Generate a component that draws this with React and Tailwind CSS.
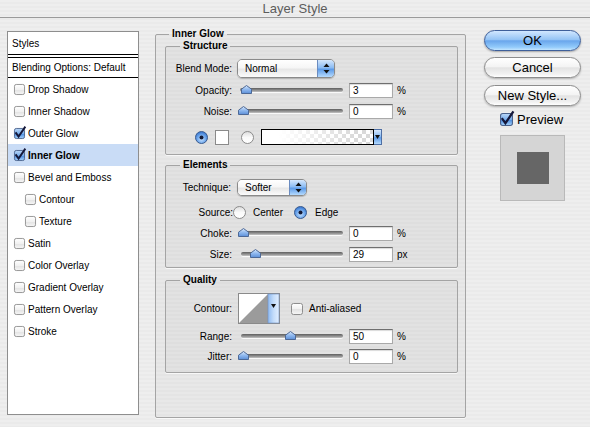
import React from 'react';

// --- small Aqua widgets ---
const Checkbox = ({ checked, size = 11 }) => (
    <svg width={size} height={size} viewBox="0 0 12 12" className="shrink-0 overflow-visible">
        <defs>
            <linearGradient id="cbOff" x1="0" y1="0" x2="0" y2="1">
                <stop offset="0" stopColor="#ffffff" />
                <stop offset="0.5" stopColor="#f1f1f1" />
                <stop offset="0.55" stopColor="#e3e3e3" />
                <stop offset="1" stopColor="#f7f7f7" />
            </linearGradient>
            <linearGradient id="cbOn" x1="0" y1="0" x2="0" y2="1">
                <stop offset="0" stopColor="#bcd8f8" />
                <stop offset="0.5" stopColor="#78aeec" />
                <stop offset="0.55" stopColor="#4d8ee0" />
                <stop offset="1" stopColor="#a6d2fb" />
            </linearGradient>
        </defs>
        <rect x="0.5" y="0.5" width="11" height="11" rx="2" fill={checked ? 'url(#cbOn)' : 'url(#cbOff)'} stroke={checked ? '#4a628c' : '#8e8e8e'} />
        {checked && <path d="M2.3 5.6 L5 9.4 L11.8 -0.6" fill="none" stroke="#15183a" strokeWidth="2.1" strokeLinecap="square" />}
    </svg>
);

const Radio = ({ on }) => (
    <svg width="13" height="13" viewBox="0 0 13 13" className="shrink-0">
        <defs>
            <radialGradient id="rdOn" cx="0.5" cy="0.65" r="0.6">
                <stop offset="0" stopColor="#c6e2ff" />
                <stop offset="0.6" stopColor="#6da6ec" />
                <stop offset="1" stopColor="#3a78d0" />
            </radialGradient>
            <linearGradient id="rdOff" x1="0" y1="0" x2="0" y2="1">
                <stop offset="0" stopColor="#dcdcdc" />
                <stop offset="0.5" stopColor="#fafafa" />
                <stop offset="1" stopColor="#ffffff" />
            </linearGradient>
        </defs>
        <circle cx="6.5" cy="6.5" r="6" fill={on ? 'url(#rdOn)' : 'url(#rdOff)'} stroke={on ? '#3c5c8e' : '#8a8a8a'} />
        {on && <circle cx="6.5" cy="6.5" r="2" fill="#141a36" />}
    </svg>
);

const Thumb = () => (
    <svg width="11" height="9" viewBox="0 0 11 9">
        <defs>
            <linearGradient id="thb" x1="0" y1="0" x2="0" y2="1">
                <stop offset="0" stopColor="#d7e8fc" />
                <stop offset="0.5" stopColor="#8fb8ee" />
                <stop offset="1" stopColor="#5c8fd8" />
            </linearGradient>
        </defs>
        <polygon points="5.5,0.5 10.5,4.2 10.5,8.5 0.5,8.5 0.5,4.2" fill="url(#thb)" stroke="#4c6896" />
    </svg>
);

const Slider = ({ pct, className = 'ml-[8px] w-[103px]' }) => (
    <div className={`relative h-[15px] flex items-center ${className}`}>
        <div className="w-full h-[4px] -mt-[2px] rounded-full bg-[linear-gradient(#5e5e5e,#8f8f8f_55%,#c4c4c4)] shadow-[0_1px_0_rgba(255,255,255,0.8)]" />
        <div className="absolute top-[2px]" style={{ left: `${pct * 92 - 2}px` }}>
            <Thumb />
        </div>
    </div>
);

const NumField = ({ value }) => (
    <div className="ml-[6px] w-[44px] h-[15px] bg-white border border-[#a9a9a9] border-t-[#6f6f6f] shadow-[inset_0_1px_1px_rgba(0,0,0,0.15)] pl-[3px] leading-[14px] text-[10px] text-black">
        {value}
    </div>
);

const PopUp = ({ value, className }) => (
    <div className={`flex overflow-hidden rounded-[5px] border border-[#8a8a8a] shadow-[0_1px_1px_rgba(0,0,0,0.2)] ${className}`}>
        <div className="flex-1 flex items-center pl-[7px] text-[10px] text-black bg-[linear-gradient(#ffffff,#f6f6f6_45%,#e7e7e7_55%,#fbfbfb)]">
            {value}
        </div>
        <div className="w-[17px] flex items-center justify-center border-l border-[#6b8cc0] bg-[linear-gradient(#d5e7fc,#8cbcf3_45%,#5d9be8_55%,#b5dafd)]">
            <svg width="7" height="11" viewBox="0 0 7 11">
                <polygon points="3.5,0.5 6.5,4 0.5,4" fill="#111" />
                <polygon points="3.5,10.5 6.5,7 0.5,7" fill="#111" />
            </svg>
        </div>
    </div>
);

const AquaButton = ({ children, primary }) => (
    <div className={primary
        ? 'h-[21px] rounded-full border border-[#3e5f9a] flex items-center justify-center text-[13px] text-black bg-[linear-gradient(#d1e7ff,#95c4f5_45%,#6aa6ec_52%,#93cbfb_85%,#c4e6ff)] shadow-[0_1px_2px_rgba(0,0,0,0.3)]'
        : 'h-[21px] rounded-full border border-[#8c8c8c] flex items-center justify-center text-[13px] text-black bg-[linear-gradient(#ffffff,#f4f4f4_45%,#e3e3e3_52%,#f2f2f2_85%,#ffffff)] shadow-[0_1px_2px_rgba(0,0,0,0.25)]'}>
        {children}
    </div>
);

const Label = ({ children, className = 'w-[66px]' }) => (
    <div className={`shrink-0 text-right text-[10px] text-black ${className}`}>{children}</div>
);

const STYLES = [
    { name: 'Drop Shadow' },
    { name: 'Inner Shadow' },
    { name: 'Outer Glow', checked: true },
    { name: 'Inner Glow', checked: true, active: true },
    { name: 'Bevel and Emboss' },
    { name: 'Contour', sub: true },
    { name: 'Texture', sub: true },
    { name: 'Satin' },
    { name: 'Color Overlay' },
    { name: 'Gradient Overlay' },
    { name: 'Pattern Overlay' },
    { name: 'Stroke' },
];

const fieldsetCls = 'border border-[#a4a4a4] rounded-[2px] bg-black/[0.025] shadow-[0_1px_0_rgba(255,255,255,0.7)]';
const legendCls = 'ml-[14px] px-[3px] leading-[12px] text-[10px] font-bold text-black';

const App = () => {
    return (
        <div className="w-[590px] h-[427px] overflow-hidden font-['Liberation_Sans',Arial,sans-serif] bg-[repeating-linear-gradient(180deg,#eeeeee_0px,#eeeeee_2px,#eaeaea_2px,#eaeaea_4px)]">
            {/* Title bar */}
            <div className="h-[18px] border-b border-[#9a9a9a] flex items-center justify-center text-[13px] text-[#5c5c5c] leading-none pb-[1px]">
                Layer Style
            </div>

            <div className="flex items-start">
                {/* Styles list */}
                <div className="ml-[7px] mt-[13px] w-[132px] h-[384px] bg-white border border-[#8e8e8e] text-[10px] text-black">
                    <div className="h-[22px] flex items-center pl-[4px]">Styles</div>
                    <div className="h-[4px] border-t-[1.5px] border-b-[1.5px] border-black" />
                    <div className="h-[20px] flex items-center pl-[4px] border-b border-black">Blending Options: Default</div>
                    {STYLES.map(s => (
                        <div key={s.name} className={`h-[22px] flex items-center ${s.active ? 'bg-[#c9dcf6] font-bold' : ''}`}>
                            <div className={s.sub ? 'ml-[17px]' : 'ml-[6px]'}>
                                <Checkbox checked={s.checked} />
                            </div>
                            <span className="ml-[3px]">{s.name}</span>
                        </div>
                    ))}
                </div>

                {/* Inner Glow panel */}
                <fieldset className={`ml-[16px] mt-[10px] w-[311px] h-[390px] pl-[9px] pr-[7px] ${fieldsetCls}`}>
                    <legend className="ml-[4px] px-[3px] leading-[12px] text-[10px] font-bold text-black">Inner Glow</legend>

                    {/* Structure */}
                    <fieldset className={`h-[115px] ${fieldsetCls}`}>
                        <legend className={legendCls}>Structure</legend>
                        <div className="mt-[7px] flex items-center h-[19px]">
                            <Label>Blend Mode:</Label>
                            <PopUp value="Normal" className="ml-[5px] w-[98px] h-[19px]" />
                        </div>
                        <div className="mt-[5px] flex items-center h-[15px]">
                            <Label>Opacity:</Label>
                            <Slider pct={0.03} />
                            <NumField value="3" />
                            <span className="ml-[4px] text-[10px] text-black">%</span>
                        </div>
                        <div className="mt-[6px] flex items-center h-[15px]">
                            <Label>Noise:</Label>
                            <Slider pct={0} />
                            <NumField value="0" />
                            <span className="ml-[4px] text-[10px] text-black">%</span>
                        </div>
                        <div className="mt-[10px] flex items-center h-[16px]">
                            <div className="ml-[29px]"><Radio on /></div>
                            <div className="ml-[7px] w-[14px] h-[15px] bg-white border border-[#8a8a8a]" />
                            <div className="ml-[12px]"><Radio /></div>
                            <div className="ml-[7px] w-[113px] h-[16px] border border-black bg-[image:linear-gradient(90deg,#ffffff_15%,rgba(255,255,255,0)_85%),repeating-conic-gradient(#d9d9d9_0_25%,#ffffff_0_50%)] bg-[length:100%_100%,8px_8px]" />
                            <div className="w-[8px] h-[16px] border border-l-0 border-[#4e6fa4] flex items-center justify-center bg-[linear-gradient(#d5e7fc,#8cbcf3_45%,#5d9be8_55%,#b5dafd)]">
                                <svg width="5" height="4" viewBox="0 0 5 4"><polygon points="0,0 5,0 2.5,4" fill="#111" /></svg>
                            </div>
                        </div>
                    </fieldset>

                    {/* Elements */}
                    <fieldset className={`mt-[4px] h-[109px] ${fieldsetCls}`}>
                        <legend className={legendCls}>Elements</legend>
                        <div className="mt-[8px] flex items-center h-[17px]">
                            <Label className="w-[65px]">Technique:</Label>
                            <PopUp value="Softer" className="ml-[6px] w-[70px] h-[17px]" />
                        </div>
                        <div className="mt-[10px] flex items-center h-[13px] text-[10px] text-black">
                            <Label className="w-[67px]">Source:</Label>
                            <Radio />
                            <span className="ml-[7px]">Center</span>
                            <div className="ml-[11px]"><Radio on /></div>
                            <span className="ml-[8px]">Edge</span>
                        </div>
                        <div className="mt-[7px] flex items-center h-[15px]">
                            <Label>Choke:</Label>
                            <Slider pct={0} />
                            <NumField value="0" />
                            <span className="ml-[4px] text-[10px] text-black">%</span>
                        </div>
                        <div className="mt-[6px] flex items-center h-[15px]">
                            <Label>Size:</Label>
                            <Slider pct={0.116} className="ml-[9px] w-[102px]" />
                            <NumField value="29" />
                            <span className="ml-[4px] text-[10px] text-black">px</span>
                        </div>
                    </fieldset>

                    {/* Quality */}
                    <fieldset className={`mt-[6px] h-[99px] ${fieldsetCls}`}>
                        <legend className={legendCls}>Quality</legend>
                        <div className="mt-[7px] flex items-center h-[31px]">
                            <Label>Contour:</Label>
                            <svg width="42" height="31" viewBox="0 0 42 31" className="ml-[6px]">
                                <defs>
                                    <linearGradient id="ctr" x1="0" y1="0" x2="1" y2="0">
                                        <stop offset="0" stopColor="#8fbaf0" />
                                        <stop offset="0.5" stopColor="#c3dcfa" />
                                        <stop offset="1" stopColor="#e2efff" />
                                    </linearGradient>
                                </defs>
                                <rect x="0.5" y="0.5" width="41" height="30" fill="#fff" stroke="#8a8a8a" />
                                <polygon points="1,30 30,1 30,30" fill="#9b9b9b" />
                                <rect x="30" y="1" width="11" height="29" fill="url(#ctr)" stroke="#6f8fc2" strokeWidth="0.6" />
                                <polygon points="33,11 38,11 35.5,15" fill="#111" />
                            </svg>
                            <div className="ml-[11px]"><Checkbox size={12} /></div>
                            <span className="ml-[6px] text-[10px] text-black">Anti-aliased</span>
                        </div>
                        <div className="mt-[5px] flex items-center h-[15px]">
                            <Label>Range:</Label>
                            <Slider pct={0.5} className="ml-[9px] w-[102px]" />
                            <NumField value="50" />
                            <span className="ml-[4px] text-[10px] text-black">%</span>
                        </div>
                        <div className="mt-[5px] flex items-center h-[15px]">
                            <Label>Jitter:</Label>
                            <Slider pct={0} />
                            <NumField value="0" />
                            <span className="ml-[4px] text-[10px] text-black">%</span>
                        </div>
                    </fieldset>
                </fieldset>

                {/* Buttons column */}
                <div className="ml-[18px] mt-[12px] w-[97px] flex flex-col">
                    <AquaButton primary>OK</AquaButton>
                    <div className="mt-[6px]"><AquaButton>Cancel</AquaButton></div>
                    <div className="mt-[7px]"><AquaButton>New Style...</AquaButton></div>
                    <div className="mt-[7px] ml-[16px] flex items-center">
                        <Checkbox checked size={13} />
                        <span className="ml-[4px] text-[13px] text-black leading-none">Preview</span>
                    </div>
                    <div className="mt-[9px] ml-[16px] w-[65px] h-[66px] bg-[#d5d5d5] border border-[#b9b9b9] flex items-center justify-center">
                        <div className="w-[32px] h-[32px] bg-[#666666]" />
                    </div>
                </div>
            </div>
        </div>
    );
};

export default App;
